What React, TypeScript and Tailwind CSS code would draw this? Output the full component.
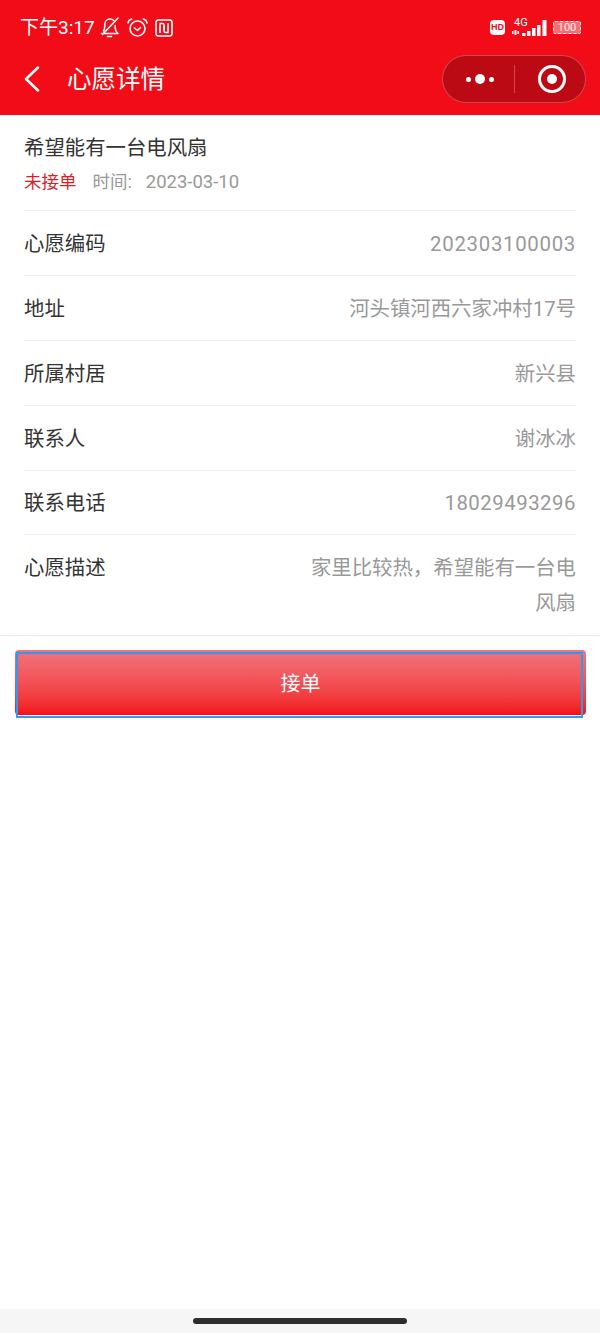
import React from 'react';

const rows = [
  { label: '心愿编码', value: '202303100003', valueClass: 'tracking-[0.7px]', rowClass: 'h-[65px]' },
  { label: '地址', value: '河头镇河西六家冲村17号', valueClass: '', rowClass: 'h-[65px]' },
  { label: '所属村居', value: '新兴县', valueClass: '', rowClass: 'h-[65px]' },
  { label: '联系人', value: '谢冰冰', valueClass: '', rowClass: 'h-[65px]' },
  { label: '联系电话', value: '18029493296', valueClass: 'tracking-[0.5px]', rowClass: 'h-[64px]' },
];

const StatusIcons = () => (
  <div className="ml-[5px] flex items-center gap-[7px]">
    {/* muted bell */}
    <svg width="20" height="21" viewBox="0 0 20 21" fill="none" stroke="white" strokeWidth="1.6" strokeLinecap="round" strokeLinejoin="round">
      <path d="M1.5 16.5h16.5c-1.800-1.500-2.800-2.800-2.800-5.500V8.500" />
      <path d="M3.500 14c.8-1 1.200-2 1.200-4V8c0-3.500 2.300-6 5.300-6 1.500 0 2.800.5 3.800 1.500" />
      <path d="M2.500 17.500L18 1" />
      <path d="M7.500 19.500h4" />
    </svg>
    {/* alarm */}
    <svg width="21" height="21" viewBox="0 0 21 21" fill="none" stroke="white" strokeWidth="1.6" strokeLinecap="round" strokeLinejoin="round">
      <circle cx="10.500" cy="11.500" r="7.500" />
      <path d="M1 6c.3-2 1.600-3.500 3.700-4" />
      <path d="M20 6c-.3-2-1.600-3.500-3.700-4" />
      <path d="M7.500 11l3 2.500 3-3" />
    </svg>
    {/* nfc */}
    <svg width="18" height="18" viewBox="0 0 18 18" fill="none" stroke="white" strokeWidth="1.6" strokeLinejoin="round">
      <rect x="1" y="1" width="16" height="16" rx="2.500" />
      <path d="M5 14V4.500h2.500c1 0 1.500.5 1.500 1.500v5" />
      <path d="M13 4v9.500h-2.500c-1 0-1.500-.5-1.500-1.500V7" />
    </svg>
  </div>
);

const SignalIcons = () => (
  <div className="flex items-center gap-[6px]">
    <div className="flex h-[15px] w-[15px] items-center justify-center rounded-[4px] bg-white">
      <span className="font-['Liberation_Sans',sans-serif] text-[9px] font-black leading-none text-[#f10c18]">HD</span>
    </div>
    <div className="relative ml-[1px] h-[20px] w-[35px]">
      <span className="absolute left-[2px] top-[-1px] font-['Roboto',sans-serif] text-[11px] leading-[12px] text-white">4G</span>
      <svg width="35" height="20" viewBox="0 0 35 20" fill="white" className="absolute left-0 top-[2px]">
        <rect x="0" y="11" width="1.500" height="3" />
        <rect x="2.500" y="10" width="2" height="5" />
        <rect x="5.500" y="11" width="1.500" height="3" />
        <rect x="10" y="13" width="3.500" height="3" />
        <rect x="15" y="11" width="3.500" height="5" />
        <rect x="20" y="8" width="3.500" height="8" />
        <rect x="25" y="5" width="3.500" height="11" />
        <rect x="30.500" y="0" width="4" height="16" />
      </svg>
    </div>
    <div className="flex h-[13px] w-[28px] items-center justify-center rounded-[2px] border border-dashed border-white bg-white/40">
      <span className="font-['Roboto',sans-serif] text-[11px] leading-none text-white/90">100</span>
    </div>
  </div>
);

export default function App() {
  return (
    <div className="flex min-h-[1333px] flex-col bg-white font-['Roboto','Noto_Sans_CJK_SC',sans-serif]">
      <header className="h-[115px] bg-[#f10c18] text-white">
        <div className="flex h-[55px] items-center justify-between pl-[20px] pr-[19px]">
          <div className="flex items-center">
            <span className="text-[19px] leading-none">下午3:17</span>
            <StatusIcons />
          </div>
          <SignalIcons />
        </div>
        <div className="flex h-[48px] items-center justify-between pl-[24px] pr-[14px]">
          <div className="flex items-center">
            <svg width="16" height="26" viewBox="0 0 16 26" fill="none" stroke="white" strokeWidth="2.500" strokeLinecap="round" strokeLinejoin="round">
              <path d="M14 1.500L2 13l12 11.500" />
            </svg>
            <h1 className="ml-[27px] mt-[2px] text-[24.5px] font-normal leading-none">心愿详情</h1>
          </div>
          <div className="flex h-[48px] w-[144px] items-center rounded-full border border-white/25 bg-[#bb0a13]">
            <div className="flex w-[71px] items-center justify-center gap-[4px] pl-[2px]">
              <span className="h-[5px] w-[5px] rounded-full bg-white" />
              <span className="h-[10px] w-[10px] rounded-full bg-white" />
              <span className="h-[5px] w-[5px] rounded-full bg-white" />
            </div>
            <div className="h-[28px] w-px bg-white/25" />
            <div className="flex flex-1 items-center justify-center pl-[3px]">
              <div className="flex h-[28px] w-[28px] items-center justify-center rounded-full border-[3px] border-white">
                <span className="h-[10px] w-[10px] rounded-full bg-white" />
              </div>
            </div>
          </div>
        </div>
      </header>

      <main className="flex-1">
        <div className="border-b border-[#e8e8e8]">
          <div className="mx-[24px] h-[96px] border-b border-[#eeeeee] pt-[19px]">
            <div className="text-[20.4px] leading-[28px] text-[#333333]">希望能有一台电风扇</div>
            <div className="mt-[8px] flex items-center text-[17.5px] leading-[24px]">
              <span className="text-[#d81e2a]">未接单</span>
              <span className="ml-[16px] text-[#999999]">时间:</span>
              <span className="ml-[14px] text-[18.5px] text-[#999999]">2023-03-10</span>
            </div>
          </div>
          {rows.map((row) => (
            <div key={row.label} className={`mx-[24px] flex items-center justify-between border-b border-[#eeeeee] pt-[2px] text-[20.4px] ${row.rowClass}`}>
              <span className="text-[#333333]">{row.label}</span>
              <span className={`text-[#999999] ${row.valueClass}`}>{row.value}</span>
            </div>
          ))}
          <div className="mx-[24px] flex h-[100px] justify-between pt-[16px] text-[20.4px] leading-[35px]">
            <span className="text-[#333333]">心愿描述</span>
            <span className="w-[270px] text-right text-[#999999]">家里比较热，希望能有一台电风扇</span>
          </div>
        </div>

        <div className="relative ml-[15px] mt-[14px] w-[571px]">
          <button className="flex h-[65px] w-full items-center justify-center rounded-[4px] bg-gradient-to-b from-[#f0737f] to-[#f20c19] pt-[2px] text-[20px] text-white">
            接单
          </button>
          <div className="absolute left-[1px] top-[2px] h-[66px] w-[567px] border-2 border-[#2f9bf0]" />
        </div>
      </main>

      <footer className="flex h-[24px] items-center justify-center bg-[#f6f6f6]">
        <div className="h-[6px] w-[214px] rounded-full bg-[#2e2e2e]" />
      </footer>
    </div>
  );
}
